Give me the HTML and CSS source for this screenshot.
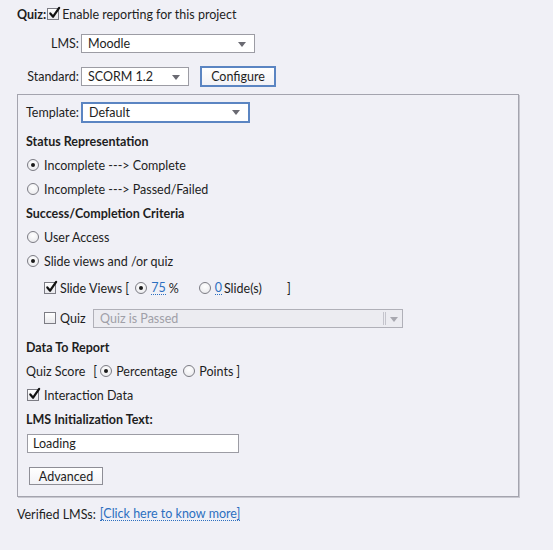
FILE: index.html
```html
<!DOCTYPE html>
<html>
<head>
<meta charset="utf-8">
<link rel="stylesheet" href="styles.css">
</head>
<body>
<div class="page">
  <div class="row r1">
    <span class="bold">Quiz:</span>
    <span class="cb checked"><svg viewBox="0 0 14 14"><path d="M2.5 7.5 L5.5 11 L12 1.5" /></svg></span>
    <span class="lbl">Enable reporting for this project</span>
  </div>
  <div class="row r2">
    <span class="fl fl-lms">LMS:</span>
    <div class="select s-lms"><span>Moodle</span><i class="arr"></i></div>
  </div>
  <div class="row r3">
    <span class="fl fl-std">Standard:</span>
    <div class="select s-std"><span>SCORM 1.2</span><i class="arr"></i></div>
    <button class="btn btn-cfg">Configure</button>
  </div>

  <div class="panel">
    <div class="prow p-tpl">
      <span class="tl">Template:</span>
      <div class="select s-tpl focus"><span>Default</span><i class="arr"></i></div>
    </div>
    <div class="prow h24 bold">Status Representation</div>
    <div class="prow h24 opt"><span class="rd on"></span><span>Incomplete ---&gt; Complete</span></div>
    <div class="prow h24 opt"><span class="rd"></span><span>Incomplete ---&gt; Passed/Failed</span></div>
    <div class="prow h24 bold">Success/Completion Criteria</div>
    <div class="prow h24 opt"><span class="rd"></span><span>User Access</span></div>
    <div class="prow h24 opt"><span class="rd on"></span><span>Slide views and /or quiz</span></div>
    <div class="prow h30 sub">
      <span class="cb checked"><svg viewBox="0 0 14 14"><path d="M2.5 7.5 L5.5 11 L12 1.5" /></svg></span>
      <span class="sv">Slide Views [</span>
      <span class="rd on rd-pct"></span>
      <span class="num">75</span><span class="pct">%</span>
      <span class="rd rd-sl"></span>
      <span class="num">0</span><span class="sl">Slide(s)</span>
      <span class="brk">]</span>
    </div>
    <div class="prow h30 sub">
      <span class="cb"></span>
      <span class="qz">Quiz</span>
      <div class="select disabled"><span>Quiz is Passed</span><i class="sep"></i><i class="arr"></i></div>
    </div>
    <div class="prow h24 bold mt2">Data To Report</div>
    <div class="prow h24 qs">
      <span>Quiz Score</span><span class="ob">[</span>
      <span class="rd on"></span><span class="pc">Percentage</span>
      <span class="rd"></span><span>Points</span><span class="cbk">]</span>
    </div>
    <div class="prow h24 opt"><span class="cb checked"><svg viewBox="0 0 14 14"><path d="M2.5 7.5 L5.5 11 L12 1.5" /></svg></span><span>Interaction Data</span></div>
    <div class="prow h24 bold">LMS Initialization Text:</div>
    <div class="prow inp-row"><div class="input">Loading</div></div>
    <div class="prow adv-row"><button class="btn btn-adv">Advanced</button></div>
  </div>

  <div class="row foot">
    <span>Verified LMSs:</span>
    <a class="link">[Click here to know more]</a>
  </div>
</div>
</body>
</html>
```

FILE: styles.css
```css
* { box-sizing: border-box; }
html, body { margin: 0; padding: 0; }
body {
  background: #f0f0f6;
  font-family: Lato, "Liberation Sans", sans-serif;
  font-size: 12.5px;
  color: #1e1e1e;
  width: 553px;
  height: 550px;
  overflow: hidden;
}
.page { padding: 4px 0 0 17px; }
.bold { font-weight: 700; }
.row { display: flex; align-items: center; }
.r1 { height: 20px; }
.r1 .cb { margin: 0 3px 0 1px; }
.r2 { height: 19px; margin-top: 10px; }
.r3 { height: 20px; margin-top: 13px; }
.fl { text-align: right; padding-right: 2px; }
.fl-lms { width: 64px; }
.fl-std { width: 64px; }

.select {
  position: relative;
  height: 19px;
  background: #fff;
  border: 1px solid #9c9ca4;
  display: flex;
  align-items: center;
  padding-left: 6px;
}
.select .arr {
  position: absolute;
  right: 8px;
  top: 7px;
  width: 0; height: 0;
  border-left: 4px solid transparent;
  border-right: 4px solid transparent;
  border-top: 5px solid #6a6a72;
}
.s-lms { width: 174px; }
.s-std { width: 108px; }
.btn {
  font: inherit;
  color: #1e1e1e;
  background: linear-gradient(#ffffff, #f2f2f6);
  border: 1px solid #8e8e96;
  padding: 0;
}
.btn-cfg {
  margin-left: 11px;
  width: 76px;
  height: 21px;
  border: 2px solid #5b85c2;
}

.panel {
  margin-top: 8px;
  width: 502px;
  height: 403px;
  border: 1px solid #a4a4ae;
  box-shadow: 1px 1px 0 #c8c8d0;
  padding: 7px 0 0 8px;
}
.prow { display: flex; align-items: center; }
.p-tpl { height: 21px; }
.tl { width: 55px; }
.s-tpl { width: 169px; height: 21px; }
.focus { border: 2px solid #5b85c2; }
.focus .arr { top: 6px; }
.h24 { height: 24px; }
.h30 { height: 30px; }
.p-tpl + .h24 { margin-top: 6px; }
.opt { padding-left: 1px; }
.opt .rd, .opt .cb { margin-right: 5px; }

.rd {
  display: inline-block;
  width: 12px; height: 12px;
  border-radius: 50%;
  border: 1px solid #7c7c84;
  background: radial-gradient(circle at 50% 35%, #ffffff, #e6e6ea);
  position: relative;
  flex: none;
}
.rd.on::after {
  content: "";
  position: absolute;
  left: 3px; top: 3px;
  width: 4px; height: 4px;
  border-radius: 50%;
  background: #1a1a1a;
}
.cb {
  display: inline-block;
  width: 12px; height: 12px;
  border: 1px solid #7c7c84;
  background: linear-gradient(#ffffff, #e8e8ec);
  position: relative;
  flex: none;
}
.cb svg {
  position: absolute;
  left: 0; top: -3px;
  width: 13px; height: 14px;
  overflow: visible;
}
.cb svg path {
  fill: none;
  stroke: #111;
  stroke-width: 2.4;
  stroke-linecap: round;
  stroke-linejoin: round;
}

.sub { padding-left: 18px; }
.sub .cb { margin-right: 4px; }
.sv { margin-right: 6px; }
.rd-pct { margin-right: 4px; }
.num {
  color: #2c6fc0;
  border-bottom: 1px dotted #2c6fc0;
  line-height: 12px;
}
.pct { margin-left: 3px; width: 30px; }
.rd-sl { margin-right: 4px; }
.sl { margin-left: 2px; width: 63px; }
.qz { width: 33px; }
.disabled {
  width: 310px;
  height: 19px;
  background: #ececf1;
  border-color: #b0b0b8;
  color: #a0a0a8;
}
.disabled .sep {
  position: absolute;
  right: 16px;
  top: 2px;
  width: 3px;
  height: 13px;
  border-left: 1px solid #c4c4cc;
  border-right: 1px solid #c4c4cc;
}
.disabled .arr { right: 4px; border-top-color: #a8a8b0; }
.mt2 { margin-top: 2px; }
.qs .ob { margin-left: 8px; margin-right: 3px; }
.qs .rd { margin-right: 4px; }
.pc { margin-right: 6px; }
.cbk { margin-left: 3px; }

.inp-row { height: 19px; margin-top: 3px; padding-left: 1px; }
.input {
  width: 212px;
  height: 19px;
  background: #fff;
  border: 1px solid #9c9ca4;
  padding-left: 5px;
  display: flex;
  align-items: center;
}
.adv-row { margin-top: 14px; padding-left: 3px; }
.btn-adv { width: 74px; height: 18px; }

.foot { margin-top: 8px; height: 18px; }
.link {
  margin-left: 4px;
  color: #2c6fc0;
  border-bottom: 1px dotted #2c6fc0;
  line-height: 13px;
}
```
